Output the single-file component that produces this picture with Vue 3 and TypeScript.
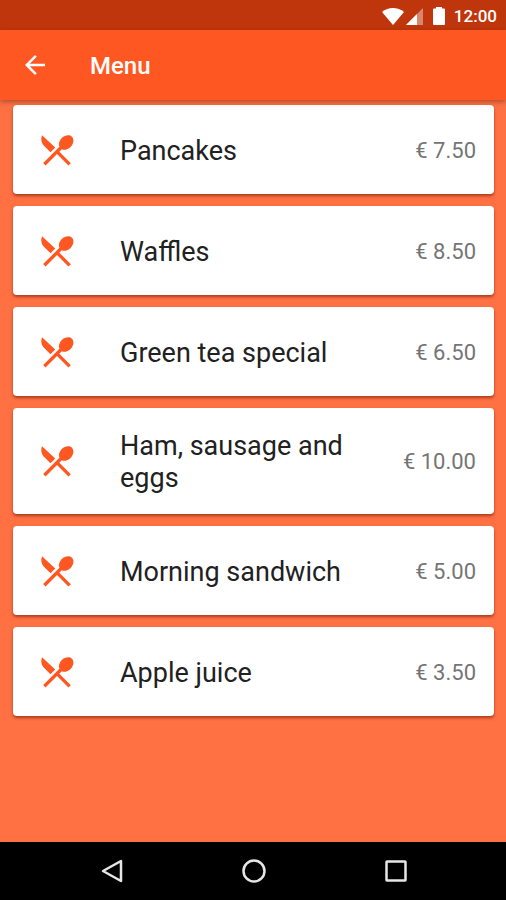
<script setup lang="ts">
interface MenuItem {
  name: string
  price: string
}

const items: MenuItem[] = [
  { name: 'Pancakes', price: '€ 7.50' },
  { name: 'Waffles', price: '€ 8.50' },
  { name: 'Green tea special', price: '€ 6.50' },
  { name: 'Ham, sausage and eggs', price: '€ 10.00' },
  { name: 'Morning sandwich', price: '€ 5.00' },
  { name: 'Apple juice', price: '€ 3.50' },
]
</script>

<template>
  <div class="screen">
    <div class="status-bar">
      <svg class="wifi" viewBox="0 0 22 17" aria-hidden="true">
        <path d="M11 17 0 4C3 1.500 7 0 11 0s8 1.500 11 4z" />
      </svg>
      <svg class="signal" viewBox="0 0 17 17" aria-hidden="true">
        <path class="faded" d="M17 0v17H0z" />
        <path d="M11 6v11H0z" />
      </svg>
      <svg class="battery" viewBox="0 0 12 18" aria-hidden="true">
        <path d="M3 0h6v1.500h2a1 1 0 0 1 1 1V17a1 1 0 0 1-1 1H1a1 1 0 0 1-1-1V2.500a1 1 0 0 1 1-1h2z" />
      </svg>
      <span class="clock">12:00</span>
    </div>

    <header class="app-bar">
      <button class="back" type="button" aria-label="Back">
        <svg viewBox="0 0 24 24" aria-hidden="true">
          <path d="M20 11H7.830l5.590-5.590L12 4l-8 8 8 8 1.410-1.410L7.830 13H20v-2z" />
        </svg>
      </button>
      <h1>Menu</h1>
    </header>

    <main>
      <ul class="menu">
        <li v-for="item in items" :key="item.name" class="card">
          <svg class="dining" viewBox="0 0 24 24" aria-hidden="true">
            <path
              d="M8.100 13.340l2.830-2.830L3 3.100c-.7 2-.6 4.300.9 6.060zm6.780-1.810c1.530.71 3.680.21 5.270-1.380 1.910-1.910 2.280-4.650.81-6.120-1.460-1.460-4.200-1.100-6.120.81-1.590 1.590-2.090 3.740-1.380 5.270L3.700 19.870l1.410 1.410L12 14.410l6.880 6.880 1.410-1.410L13.410 13l1.470-1.470z"
            />
          </svg>
          <span class="name">{{ item.name }}</span>
          <span class="price">{{ item.price }}</span>
        </li>
      </ul>
    </main>

    <nav class="nav-bar" aria-label="System">
      <button type="button" aria-label="Go back">
        <svg viewBox="0 0 28 28" aria-hidden="true"><path d="M23 4v20L5 14z" /></svg>
      </button>
      <button type="button" aria-label="Home">
        <svg viewBox="0 0 28 28" aria-hidden="true"><circle cx="14" cy="14" r="10.500" /></svg>
      </button>
      <button type="button" aria-label="Recent apps">
        <svg viewBox="0 0 28 28" aria-hidden="true"><rect x="4.500" y="4.500" width="19" height="19" rx="0.500" /></svg>
      </button>
    </nav>
  </div>
</template>

<style>
body {
  margin: 0;
}
</style>

<style scoped>
.screen {
  display: flex;
  flex-direction: column;
  min-height: 100vh;
  background: #ff7043;
  font-family: Roboto, 'Liberation Sans', sans-serif;
}

button {
  display: grid;
  place-items: center;
  padding: 0;
  border: 0;
  background: none;
  cursor: pointer;
}

.status-bar {
  display: flex;
  align-items: center;
  justify-content: flex-end;
  box-sizing: border-box;
  height: 30px;
  padding: 2px 9px 0;
  background: #bf360c;
  color: #fff;
}

.status-bar svg {
  fill: #fff;
}

.status-bar .faded {
  fill-opacity: 0.4;
}

.wifi {
  width: 22px;
  height: 17px;
  margin-right: 2px;
}

.signal {
  width: 17px;
  height: 17px;
  margin-right: 10px;
}

.battery {
  width: 12px;
  height: 18px;
  margin-right: 9px;
}

.clock {
  font-size: 17px;
  font-weight: 500;
  line-height: 28px;
}

.app-bar {
  position: relative;
  display: flex;
  align-items: center;
  gap: 36px;
  height: 70px;
  padding: 0 16px;
  background: #ff5722;
  color: #fff;
  box-shadow: 0 2px 5px rgba(0, 0, 0, 0.3);
}

.back {
  width: 38px;
  height: 48px;
}

.back svg {
  width: 30px;
  height: 30px;
  fill: #fff;
}

h1 {
  margin: 0;
  padding-top: 2px;
  font-size: 24px;
  font-weight: 500;
  line-height: 32px;
}

main {
  flex: 1;
}

.menu {
  display: flex;
  flex-direction: column;
  gap: 12px;
  margin: 0;
  padding: 5px 12px 12px 13px;
  list-style: none;
}

.card {
  display: flex;
  align-items: center;
  box-sizing: border-box;
  min-height: 89px;
  padding: 20px 18px 20px 24px;
  border-radius: 4px;
  background: #fff;
  box-shadow: 0 2px 3px rgba(100, 20, 0, 0.55);
}

.dining {
  flex: none;
  width: 40px;
  height: 40px;
  margin-right: 43px;
  fill: #ff5722;
}

.name {
  flex: 1;
  padding-top: 2px;
  color: #212121;
  font-size: 27px;
  line-height: 32px;
}

.price {
  margin-left: 24px;
  padding-top: 2px;
  color: #757575;
  font-size: 22px;
  line-height: 32px;
  white-space: nowrap;
}

.nav-bar {
  display: flex;
  align-items: center;
  justify-content: center;
  gap: 94px;
  height: 58px;
  padding-left: 2px;
  background: #000;
}

.nav-bar button {
  width: 48px;
  height: 48px;
}

.nav-bar svg {
  width: 28px;
  height: 28px;
  fill: none;
  stroke: #e6e6e6;
  stroke-width: 2.500;
  stroke-linejoin: round;
}
</style>
